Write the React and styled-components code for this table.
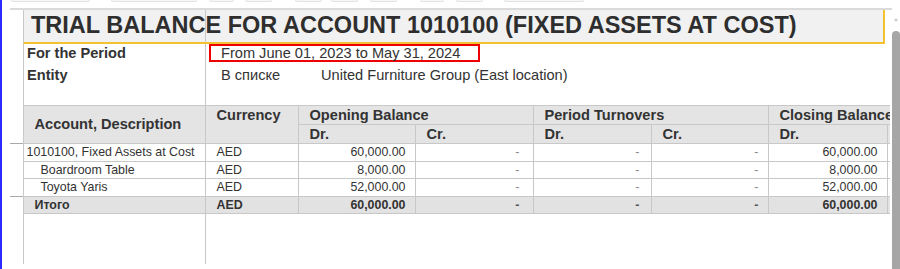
import React from "react";
import styled, { createGlobalStyle } from "styled-components";

const LINE = "#c8c8c8";
const DARK_LINE = "#a9a9a9";
const TEXT = "#333333";

const GlobalStyle = createGlobalStyle`
  html, body { margin: 0; padding: 0; background: #ffffff; }
  body { font-family: "Liberation Sans", Arial, sans-serif; color: ${TEXT}; }
  * { box-sizing: border-box; }
`;

const Frame = styled.div`
  display: flex;
  width: 900px;
  height: 269px;
  border-left: 2px solid #2b2bff;
  overflow: hidden;
`;

const Main = styled.div`
  flex: 1;
  min-width: 0;
  display: flex;
  flex-direction: column;
`;

const Toolbar = styled.div`
  height: 8px;
  display: flex;
  align-items: flex-start;
  padding-left: 9px;
`;

const ToolButton = styled.div`
  flex: none;
  width: ${(p) => p.$w}px;
  margin-left: ${(p) => p.$gap}px;
  height: 2px;
  background: #f6f6f6;
  border: 1px solid #e3e3e3;
  border-top: none;
  border-radius: 0 0 4px 4px;
`;

const Divider = styled.div`
  height: 2px;
  margin-left: 8px;
  background: #dadada;
`;

const Sheet = styled.div`
  flex: 1;
  margin-left: 8px;
  margin-right: 2px;
  display: flex;
  flex-direction: column;
  overflow: hidden;
`;

const Band = styled.div`
  display: flex;
  flex: none;
  height: ${(p) => p.$h}px;
`;

const Gutter = styled.div`
  width: 13px;
  flex: none;
`;

const TitleBox = styled.div`
  width: 862px;
  flex: none;
  height: 100%;
  border-left: 1px solid ${LINE};
  border-right: 2px solid #f2c230;
  border-bottom: 2px solid #f2c230;
  background-color: #f1f1f1;
  background-image: linear-gradient(
    to right,
    transparent 181px,
    ${LINE} 181px,
    ${LINE} 182px,
    transparent 182px
  );
  padding-left: 7px;
  font-size: 23.5px;
  font-weight: bold;
  line-height: 31px;
  color: #2e2e2e;
  white-space: nowrap;
`;

const LabelCell = styled.div`
  width: 183px;
  flex: none;
  height: 100%;
  border-left: 1px solid ${LINE};
  border-right: 1px solid ${LINE};
  padding-left: 3px;
  font-size: 14.6px;
  font-weight: bold;
  line-height: ${(p) => p.$lh || 18}px;
  white-space: nowrap;
`;

const ValueCell = styled.div`
  flex: 1;
  display: flex;
  align-items: flex-start;
  padding-left: ${(p) => p.$pl || 0}px;
  font-size: 14.6px;
  line-height: ${(p) => p.$lh || 18}px;
  white-space: nowrap;
`;

const PeriodBox = styled.div`
  margin-left: 3px;
  width: 271px;
  height: 18px;
  border: 2px solid #ee0000;
  padding-left: 10px;
  line-height: 14px;
`;

const EntityKind = styled.span`
  width: 100px;
  flex: none;
`;

const TableWrap = styled.div`
  width: 880px;
  overflow: hidden;
  flex: none;
`;

const Table = styled.table`
  border-collapse: collapse;
  table-layout: fixed;
  width: 980px;
  font-size: 12.4px;
  color: ${TEXT};
`;

const HeadCell = styled.th`
  background: #e4e4e4;
  border: 1px solid ${LINE};
  font-size: 14.6px;
  font-weight: bold;
  text-align: left;
  padding: ${(p) => (p.$middle ? "0 0 0 11px" : "1px 0 0 11px")};
  vertical-align: ${(p) => (p.$middle ? "middle" : "top")};
  line-height: 17px;
  white-space: nowrap;
  overflow: hidden;
  color: #333;
`;

const GutterCell = styled.td`
  padding: 0;
  border: none;
  border-top: ${(p) => (p.$line ? `1px solid ${DARK_LINE}` : "none")};
  background: #fff;
`;

const HeadRow = styled.tr`
  height: 19px;
`;

const DataRow = styled.tr`
  height: 17.5px;
  background: ${(p) => (p.$total ? "#e2e2e2" : "#ffffff")};
  font-weight: ${(p) => (p.$total ? "bold" : "normal")};
  & > td {
    border-top-color: ${(p) => (p.$strong ? DARK_LINE : LINE)};
  }
`;

const Cell = styled.td`
  border: 1px solid ${LINE};
  padding: 0 ${(p) => p.$pr || 0}px 0 ${(p) => p.$pl || 0}px;
  text-align: ${(p) => (p.$right ? "right" : "left")};
  color: ${(p) => (p.$muted ? (p.$bold ? "#555" : "#8a8a8a") : TEXT)};
  line-height: 16px;
  white-space: nowrap;
  overflow: hidden;
`;

const ScrollTrack = styled.div`
  width: 8px;
  flex: none;
  display: flex;
  flex-direction: column;
  align-items: center;
  padding-top: 18px;
`;

const ScrollArrow = styled.div`
  width: 0;
  height: 0;
  border-left: 2.5px solid transparent;
  border-right: 2.5px solid transparent;
  border-bottom: 3px solid #c8c8c8;
`;

const ScrollThumb = styled.div`
  margin-top: 10px;
  flex: 1;
  width: 8px;
  background: #a6a6a6;
  border-radius: 4px 4px 0 0;
`;

const toolButtons = [
  { w: 79, gap: 0 },
  { w: 86, gap: 21 },
  { w: 25, gap: 12 },
  { w: 27, gap: 11 },
  { w: 27, gap: 23 },
  { w: 27, gap: 9 },
  { w: 27, gap: 12 },
  { w: 24, gap: 23 },
  { w: 27, gap: 12 },
  { w: 80, gap: 21 },
];

const rows = [
  { label: "1010100, Fixed Assets at Cost", indent: 3, amount: "60,000.00", strong: true },
  { label: "Boardroom Table", indent: 17, amount: "8,000.00" },
  { label: "Toyota Yaris", indent: 17, amount: "52,000.00" },
];

const dashPads = [13, 11, 9];

function AmountRow({ label, indent, amount, strong, total }) {
  return (
    <DataRow $strong={strong} $total={total}>
      <GutterCell $line={strong} />
      <Cell $pl={indent}>{label}</Cell>
      <Cell $pl={11}>AED</Cell>
      <Cell $right $pr={9}>{amount}</Cell>
      {dashPads.map((pr, i) => (
        <Cell key={i} $right $pr={pr} $muted $bold={total}>
          -
        </Cell>
      ))}
      <Cell $right $pr={9}>{amount}</Cell>
      <Cell />
    </DataRow>
  );
}

export default function App() {
  return (
    <>
      <GlobalStyle />
      <Frame>
        <Main>
          <Toolbar>
            {toolButtons.map((b, i) => (
              <ToolButton key={i} $w={b.w} $gap={b.gap} />
            ))}
          </Toolbar>
          <Divider />
          <Sheet>
            <Band $h={34}>
              <Gutter />
              <TitleBox>TRIAL BALANCE FOR ACCOUNT 1010100 (FIXED ASSETS AT COST)</TitleBox>
            </Band>
            <Band $h={18}>
              <Gutter />
              <LabelCell>For the Period</LabelCell>
              <ValueCell>
                <PeriodBox>From June 01, 2023 to May 31, 2024</PeriodBox>
              </ValueCell>
            </Band>
            <Band $h={26}>
              <Gutter />
              <LabelCell $lh={26}>Entity</LabelCell>
              <ValueCell $pl={15} $lh={26}>
                <EntityKind>В списке</EntityKind>
                <span>United Furniture Group (East location)</span>
              </ValueCell>
            </Band>
            <Band $h={17}>
              <Gutter />
              <LabelCell />
            </Band>
            <TableWrap>
              <Table>
                <colgroup>
                  <col style={{ width: 13 }} />
                  <col style={{ width: 182 }} />
                  <col style={{ width: 93 }} />
                  <col style={{ width: 117 }} />
                  <col style={{ width: 118 }} />
                  <col style={{ width: 118 }} />
                  <col style={{ width: 117 }} />
                  <col style={{ width: 119 }} />
                  <col style={{ width: 103 }} />
                </colgroup>
                <thead>
                  <HeadRow>
                    <GutterCell />
                    <HeadCell rowSpan={2} $middle>
                      Account, Description
                    </HeadCell>
                    <HeadCell rowSpan={2}>Currency</HeadCell>
                    <HeadCell colSpan={2}>Opening Balance</HeadCell>
                    <HeadCell colSpan={2}>Period Turnovers</HeadCell>
                    <HeadCell colSpan={2}>Closing Balance</HeadCell>
                  </HeadRow>
                  <HeadRow>
                    <GutterCell />
                    <HeadCell>Dr.</HeadCell>
                    <HeadCell>Cr.</HeadCell>
                    <HeadCell>Dr.</HeadCell>
                    <HeadCell>Cr.</HeadCell>
                    <HeadCell>Dr.</HeadCell>
                    <HeadCell />
                  </HeadRow>
                </thead>
                <tbody>
                  {rows.map((r, i) => (
                    <AmountRow key={i} {...r} />
                  ))}
                  <AmountRow label="Итого" indent={11} amount="60,000.00" strong total />
                </tbody>
              </Table>
            </TableWrap>
            <Band $h={50}>
              <Gutter />
              <LabelCell />
            </Band>
          </Sheet>
        </Main>
        <ScrollTrack>
          <ScrollArrow />
          <ScrollThumb />
        </ScrollTrack>
      </Frame>
    </>
  );
}
